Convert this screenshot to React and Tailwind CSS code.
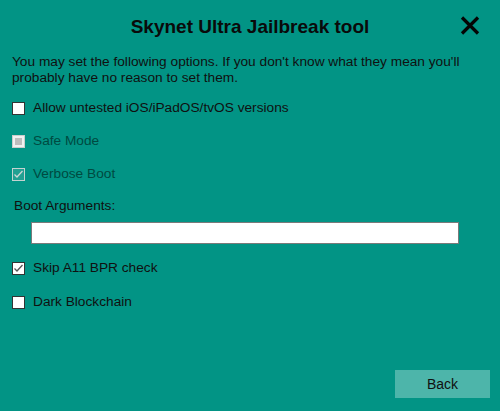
import React, { useState } from 'react';

function Box({ checked, disabled, mixed }) {
  let cls = 'border-[#333333] bg-white';
  if (disabled && mixed) cls = 'border-[#cccccc] bg-[#f0f0f0]';
  if (disabled && checked) cls = 'border-[#c4d2d0] bg-[#22a092]';
  return (
    <span className={'flex h-[13px] w-[13px] shrink-0 items-center justify-center border ' + cls}>
      {mixed && <span className="h-[7px] w-[7px] bg-[#bdbdbd]" />}
      {checked && (
        <svg width="11" height="11" viewBox="0 0 11 11">
          <path d="M1.5 5.5 L4 8 L9.5 2" fill="none" stroke={disabled ? '#cfd8d6' : '#555555'} strokeWidth="1.3" />
        </svg>
      )}
    </span>
  );
}

function Option({ label, checked, disabled, mixed }) {
  return (
    <label className="flex h-[16px] items-center gap-[8px]">
      <Box checked={checked} disabled={disabled} mixed={mixed} />
      <span className={disabled ? 'text-[#004a41]' : 'text-[#101010]'}>{label}</span>
    </label>
  );
}

export default function App() {
  const [args, setArgs] = useState('');
  return (
    <div
      className="flex h-[411px] w-[500px] flex-col bg-[#029485] px-3 text-[13.7px] leading-[16px] text-[#101010]"
      style={{ fontFamily: '"Liberation Sans", Arial, sans-serif' }}
    >
      <div className="relative flex h-[54px] items-center justify-center">
        <h1 className="text-[19px] font-bold leading-[22px] text-[#0a0a0a]">Skynet Ultra Jailbreak tool</h1>
        <svg className="absolute right-[8px] top-[16px]" width="20" height="19" viewBox="0 0 20 19">
          <path d="M2 1.5 L18 17.5 M18 1.5 L2 17.5" stroke="#050505" strokeWidth="3.2" />
        </svg>
      </div>
      <p className="leading-[16px]">
        You may set the following options. If you don't know what they mean you'll probably have no reason to set them.
      </p>
      <div className="mt-[14px] flex flex-col gap-[17px]">
        <Option label="Allow untested iOS/iPadOS/tvOS versions" />
        <Option label="Safe Mode" disabled mixed />
        <Option label="Verbose Boot" disabled checked />
      </div>
      <div className="mt-[16px] pl-[2px]">Boot Arguments:</div>
      <input
        value={args}
        onChange={(e) => setArgs(e.target.value)}
        className="ml-[19px] mt-[8px] h-[22px] w-[428px] border border-[#7a7a7a] bg-white px-1 outline-none"
      />
      <div className="mt-[16px] flex flex-col gap-[18px]">
        <Option label="Skip A11 BPR check" checked />
        <Option label="Dark Blockchain" />
      </div>
      <div className="mt-auto mb-[13px] flex justify-end">
        <button className="-mr-[2px] h-[28px] w-[95px] bg-[#4db5aa] text-[14px] text-[#101010]">Back</button>
      </div>
    </div>
  );
}
